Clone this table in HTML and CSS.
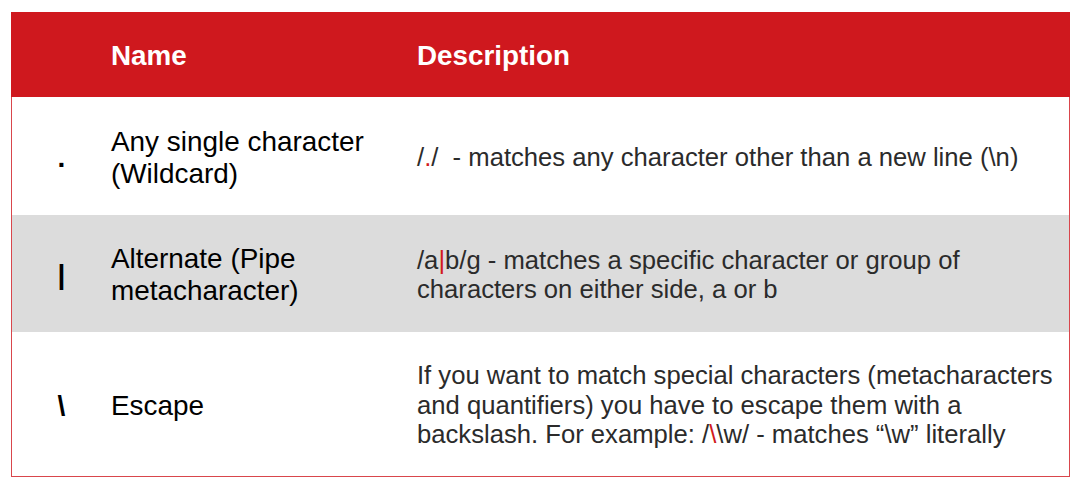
FILE: index.html
```html
<!DOCTYPE html>
<html>
<head>
<meta charset="utf-8">
<link rel="stylesheet" href="styles.css">
</head>
<body>
<div class="table">
  <div class="row head">
    <div class="hcell"></div>
    <div class="hcell">Name</div>
    <div class="hcell">Description</div>
  </div>
  <div class="row r1">
    <div class="sym">.</div>
    <div class="name">Any single character<br>(Wildcard)</div>
    <div class="desc">/<span class="hl">.</span>/&nbsp; - matches any character other than a new line (\n)</div>
  </div>
  <div class="row r2 alt">
    <div class="sym">|</div>
    <div class="name">Alternate (Pipe<br>metacharacter)</div>
    <div class="desc">/a<span class="hl">|</span>b/g - matches a specific character or group of<br>characters on either side, a or b</div>
  </div>
  <div class="row r3">
    <div class="sym">\</div>
    <div class="name">Escape</div>
    <div class="desc">If you want to match special characters (metacharacters<br>and quantifiers) you have to escape them with a<br>backslash. For example: /<span class="hl">\</span>\w/ - matches “\w” literally</div>
  </div>
</div>
</body>
</html>
```
FILE: styles.css
```css
html, body {
  margin: 0;
  padding: 0;
  background: #ffffff;
}
body {
  font-family: "Liberation Sans", Arial, sans-serif;
}
.table {
  margin: 12px 0 0 11px;
  width: 1059px;
  box-sizing: border-box;
  border: 1px solid #d9464c;
  border-top: none;
}
.row {
  display: grid;
  grid-template-columns: 99px 306px 1fr;
  align-items: center;
}
.row > div {
  padding-top: 3px;
}
.head {
  background: #cf181e;
  height: 85px;
  margin: 0 -1px;
  padding: 0 1px;
}
.hcell {
  color: #ffffff;
  font-weight: bold;
  font-size: 27.8px;
}
.r1 { height: 118px; }
.r2 { height: 117px; }
.r3 { height: 144px; }
.alt { background: #dcdcdc; }
.sym {
  text-align: center;
  font-weight: bold;
  font-size: 28px;
  color: #000;
}
.name {
  font-size: 27.9px;
  line-height: 32px;
  color: #000;
}
.desc {
  font-size: 25.65px;
  line-height: 29.5px;
  color: #2b2b2b;
}
.hl {
  color: #d11a20;
}
```
